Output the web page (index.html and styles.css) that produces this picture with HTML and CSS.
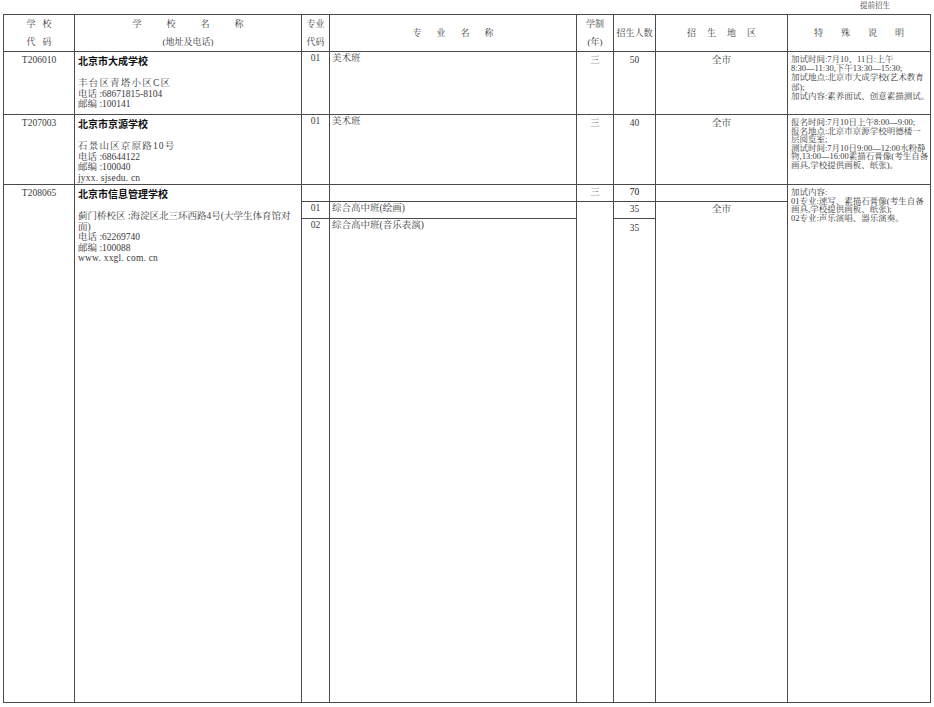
FILE: index.html
```html
<!DOCTYPE html>
<html lang="zh">
<head>
<meta charset="utf-8">
<title>提前招生</title>
<link rel="stylesheet" href="styles.css">
</head>
<body>
<div class="page">
  <div class="tag">提前招生</div>
  <table class="grid">
    <colgroup>
      <col class="c1"><col class="c2"><col class="c3"><col class="c4">
      <col class="c5"><col class="c6"><col class="c7"><col class="c8">
    </colgroup>
    <tr class="head">
      <th class="two"><span class="ls7">学校</span><br><span class="ls7">代码</span></th>
      <th class="two"><span class="ls26">学校名称</span><br><span>(地址及电话)</span></th>
      <th class="two">专业<br>代码</th>
      <th><span class="ls16">专业名称</span></th>
      <th class="two">学制<br>(年)</th>
      <th>招生人数</th>
      <th><span class="ls11">招生地区</span></th>
      <th><span class="ls18">特殊说明</span></th>
    </tr>
    <tr class="r1">
      <td class="code">T206010</td>
      <td class="school">
        <div class="name">北京市大成学校</div>
        <div class="addr"><span class="wide">丰台区青塔小区C区</span><br>电话 :68671815-8104<br>邮编 :100141</div>
      </td>
      <td class="mcode">01</td>
      <td class="major">美术班</td>
      <td class="yrs">三</td>
      <td class="num">50</td>
      <td class="area">全市</td>
      <td class="note loose">加试时间:7月10、11日:上午<br>8:30—11:30,下午13:30—15:30;<br>加试地点:北京市大成学校(艺术教育<br>部);<br>加试内容:素养面试、创意素描测试。</td>
    </tr>
    <tr class="r2">
      <td class="code">T207003</td>
      <td class="school">
        <div class="name">北京市京源学校</div>
        <div class="addr"><span class="wide">石景山区京原路10号</span><br>电话 :68644122<br>邮编 :100040<br><span class="url">jyxx. sjsedu. cn</span></div>
      </td>
      <td class="mcode">01</td>
      <td class="major">美术班</td>
      <td class="yrs">三</td>
      <td class="num">40</td>
      <td class="area">全市</td>
      <td class="note">报名时间:7月10日上午8:00—9:00;<br>报名地点:北京市京源学校明德楼一<br>层阅览室;<br>测试时间:7月10日9:00—12:00水粉静<br>物,13:00—16:00素描石膏像(考生自备<br>画具,学校提供画板、纸张)。</td>
    </tr>
    <tr class="r3a">
      <td class="code" rowspan="3">T208065</td>
      <td class="school" rowspan="3">
        <div class="name">北京市信息管理学校</div>
        <div class="addr">蓟门桥校区 :海淀区北三环西路4号(大学生体育馆对<br>面)<br>电话 :62269740<br>邮编 :100088<br><span class="url">www. xxgl. com. cn</span></div>
      </td>
      <td class="mcode"></td>
      <td class="major"></td>
      <td class="yrs">三</td>
      <td class="num bold">70</td>
      <td class="area"></td>
      <td class="note" rowspan="3">加试内容:<br>01专业:速写、素描石膏像(考生自备<br>画具,学校提供画板、纸张);<br>02专业:声乐演唱、器乐演奏。</td>
    </tr>
    <tr class="r3b">
      <td class="mcode">01</td>
      <td class="major">综合高中班(绘画)</td>
      <td class="yrs" rowspan="2"></td>
      <td class="num">35</td>
      <td class="area" rowspan="2">全市</td>
    </tr>
    <tr class="r3c">
      <td class="mcode">02</td>
      <td class="major">综合高中班(音乐表演)</td>
      <td class="num">35</td>
    </tr>
  </table>
</div>
</body>
</html>
```
FILE: styles.css
```css
html, body {
  margin: 0;
  padding: 0;
  background: #fff;
}
body {
  font-family: "Liberation Serif", "Noto Serif CJK SC", "Noto Sans CJK SC", serif;
  color: #3a3a3a;
}
.page {
  padding-left: 3px;
}
.tag {
  height: 14px;
  display: flex;
  justify-content: flex-end;
  padding-right: 44px;
  font-size: 7.5px;
  line-height: 12px;
  color: #444;
}
.grid {
  border-collapse: collapse;
  table-layout: fixed;
  width: 927px;
}
.c1 { width: 71px; }
.c2 { width: 227px; }
.c3 { width: 28px; }
.c4 { width: 247px; }
.c5 { width: 37px; }
.c6 { width: 42px; }
.c7 { width: 132px; }
.c8 { width: 143px; }

.grid th, .grid td {
  border: 1px solid #4a4a4a;
  padding: 0 3px;
  vertical-align: top;
  font-size: 9.5px;
  line-height: 10.5px;
  font-weight: normal;
  white-space: nowrap;
  overflow: hidden;
}
.grid th {
  text-align: center;
  vertical-align: middle;
  padding: 0;
  font-size: 9px;
}
.grid th.two {
  line-height: 18px;
}
.head { height: 37px; }
.r1 { height: 63px; }
.r2 { height: 70px; }
.r3a { height: 17px; }
.r3b { height: 17px; }
.r3c { height: 484px; }

.ls7 { letter-spacing: 7px; margin-right: -7px; }
.ls11 { letter-spacing: 11px; margin-right: -11px; }
.ls16 { letter-spacing: 15px; margin-right: -15px; }
.ls18 { letter-spacing: 18px; margin-right: -18px; }
.ls26 { letter-spacing: 25px; margin-right: -25px; }

.code {
  text-align: center;
  padding-top: 3px !important;
}
.school {
  padding-top: 3px !important;
}
.name {
  font-weight: bold;
  font-size: 10px;
  line-height: 12px;
  color: #111;
  font-family: "Noto Sans CJK SC", sans-serif;
}
.addr {
  margin-top: 11px;
  line-height: 10.5px;
}
.wide { letter-spacing: 1.2px; }
.url { letter-spacing: 0.2px; }
.mcode {
  text-align: center;
  padding: 1px 0 0 !important;
}
.major {
  padding: 1px 2px 0 !important;
}
.yrs, .num, .area {
  text-align: center;
  padding-top: 3px !important;
}
.r3a .yrs, .r3a .num, .r3b .num, .r3b .area { padding-top: 2px !important; }
.r3c .num { padding-top: 4px !important; }
.bold { font-weight: bold; color: #111; }
.note {
  font-size: 8.5px !important;
  line-height: 8.5px !important;
  padding: 3px 2px 0 3px !important;
}
.note.loose {
  line-height: 9.2px !important;
}
```
